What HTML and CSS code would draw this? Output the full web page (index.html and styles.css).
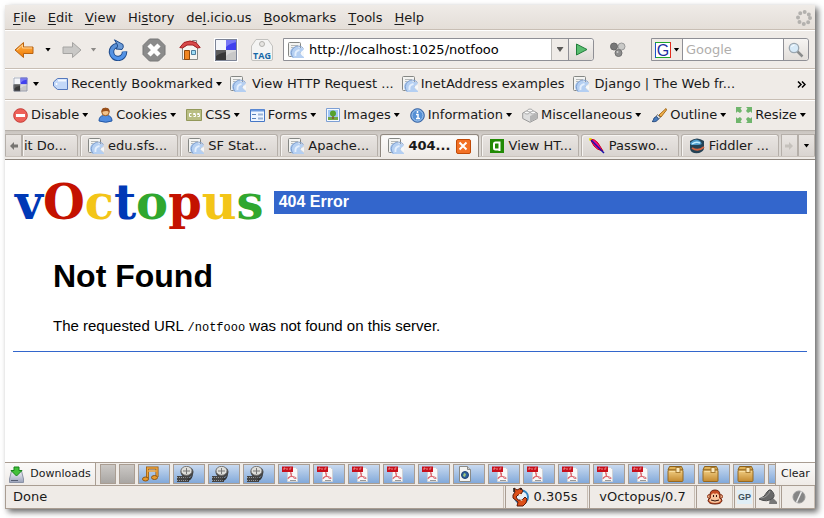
FILE: index.html
```html
<!DOCTYPE html>
<html lang="en">
<head>
<meta charset="utf-8">
<title>404 Error</title>
<link rel="stylesheet" href="styles.css">
</head>
<body>
<svg class="defs" aria-hidden="true">
  <defs>
    <linearGradient id="orange" x1="0" y1="0" x2="0" y2="1"><stop offset="0" stop-color="#ffb650"/><stop offset="1" stop-color="#f07800"/></linearGradient>
    <linearGradient id="blue" x1="0" y1="0" x2="0" y2="1"><stop offset="0" stop-color="#5a8fd4"/><stop offset="1" stop-color="#4f93ec"/></linearGradient>
    <linearGradient id="disk" x1="0" y1="0" x2="0" y2="1"><stop offset="0" stop-color="#f4f5f9"/><stop offset="1" stop-color="#9aa2ba"/></linearGradient>
    <linearGradient id="wood" x1="0" y1="0" x2="0" y2="1"><stop offset="0" stop-color="#f2cf84"/><stop offset="1" stop-color="#c48a30"/></linearGradient>
    <symbol id="page" viewBox="0 0 16 16"><rect x=".5" y=".5" width="12" height="14" rx="1" fill="#f4f4f2" stroke="#858784"/><path d="M3 3.500h7M3 5.500h7M3 7.500h3M3 9.500h2" stroke="#b5b8b8"/><path d="M5 16A6 6 0 0 1 11 5.500Q14 5.500 16 7.500L12.500 10.500 13.500 13 16 15V16z" fill="#b4cff2"/><path d="M5 15.500A6 6 0 0 1 15.500 6.500" fill="none" stroke="#7f9fce"/><path d="M7.500 14Q6.500 9 11.500 8" stroke="#e4effd" stroke-width="2" fill="none"/><path d="M12 11l4-2v5z" fill="#f6f8fa"/></symbol>
    <symbol id="delicious" viewBox="0 0 24 24"><path fill="#fff" d="M0 0h24v24H0z"/><path d="M1 1h11v11H1z" fill="#f4f6fa"/><path d="M12 1h11v11H12z" fill="#4141ee"/><path d="M12 1h11v3Q16 5 12 9z" fill="#7777f4"/><path d="M1 12h11v11H1z" fill="#383838"/><path d="M1 12h11v2Q5 15 1 19z" fill="#5c5c5c"/><path d="M12 12h11v11H12z" fill="#c8c8c8"/><path d="M12 12h11v1Q16 14 12 18z" fill="#dadada"/><path d="M1.500 1.500h21v21h-21z" fill="none" stroke="#7d8496"/></symbol>
    <symbol id="pdf" viewBox="0 0 17 16"><path d="M5.500 1.500h8l2 2v12h-10z" fill="#f8f8f8" stroke="#cfd2d6"/><path d="M0 .5h11V6H0z" fill="#c8101c"/><path d="M2 4V2h1v1M5 2v2M8 4V2h1.500" stroke="#e88c8c" fill="none"/><path d="M8.500 6.500c2 0 1 2.500 0 4S5.500 13.500 6 12s4-2 6.500-1 2 1.500.500 1.500S8 8 8.500 6.500z" fill="none" stroke="#dd6068"/><path d="M8 14.500h6" stroke="#999"/></symbol>
    <symbol id="film" viewBox="0 0 17 16"><path d="M0 10h12v6H0z" fill="#444"/><path d="M0 11.500h12M0 14.500h12" stroke="#999" stroke-dasharray="1 1"/><path d="M11 15q5-1 5-9l-2 5-4 2z" fill="#333"/><ellipse cx="10" cy="6" rx="6.500" ry="5.500" fill="#444"/><ellipse cx="9.500" cy="4.800" rx="5.500" ry="4.500" fill="#dededa" stroke="#777"/><path d="M9.500 2v6M6 5h7" stroke="#777"/></symbol>
    <symbol id="box" viewBox="0 0 17 16"><path d="M1 4l1.500-3.500h12L16 4z" fill="#e0b258" stroke="#89601f"/><rect x="1" y="4" width="15" height="11.500" rx="1" fill="url(#wood)" stroke="#966820"/><path d="M2.500 5.500h12" stroke="#f8dda0"/><rect x="9" y="1.500" width="4" height="5" fill="#fae9bd" stroke="#a77b32"/></symbol>
  </defs>
</svg>
<div class="window">
  <header class="menubar">
    <nav class="menus">
      <button><u>F</u>ile</button><button><u>E</u>dit</button><button><u>V</u>iew</button><button>Hi<u>s</u>tory</button><button>de<u>l</u>.icio.us</button><button><u>B</u>ookmarks</button><button><u>T</u>ools</button><button><u>H</u>elp</button>
    </nav>
    <svg class="throbber" viewBox="0 0 16 16"><circle cx="8" cy="8" r="6" fill="none" stroke="#b3b1ae" stroke-width="4" stroke-linecap="round" stroke-dasharray="0 4.712"/></svg>
  </header>

  <div class="navbar">
    <button class="step" aria-label="Back"><svg width="20" height="18" viewBox="0 0 20 18"><path d="M1 9l8.500-7.500V6H19v6.500H9.500v4z" fill="url(#orange)" stroke="#b96312"/><path d="M3 9l5.500-5v3H18" fill="none" stroke="#ffd092"/></svg></button>
    <button class="drop" aria-label="Back history"><i class="caret"></i></button>
    <button class="step" aria-label="Forward"><svg width="20" height="18" viewBox="0 0 20 18"><path d="M19 9l-8.500-7.500V6H1v6.500h9.500v4z" fill="#c9c8c6" stroke="#a5a4a2"/></svg></button>
    <button class="drop short" aria-label="Forward history"><i class="caret dim"></i></button>
    <button class="tool" aria-label="Reload"><svg width="20" height="22" viewBox="0 0 20 22"><path d="M16.500 12.500A6.500 6.500 0 1 1 9 6.500" fill="none" stroke="#1f4b8c" stroke-width="5.500"/><path d="M16.500 12.500A6.500 6.500 0 1 1 9 6.500" fill="none" stroke="url(#blue)" stroke-width="3.500"/><path d="M6.500.8L15 5.500q1 3-1 5L8 10q2-2 1.500-4z" fill="#6c9cd8" stroke="#1f4b8c"/></svg></button>
    <button class="tool" aria-label="Stop"><svg width="24" height="24" viewBox="0 0 24 24"><path d="M7.500 1h9L23 7.500v9L16.500 23h-9L1 16.500v-9z" fill="#8b8b8b" stroke="#777"/><path d="M7 7l10 10M17 7L7 17" stroke="#fff" stroke-width="4.500"/></svg></button>
    <button class="tool" aria-label="Home"><svg width="22" height="22" viewBox="0 0 22 22"><path d="M13.500 1.500h4v6h-4z" fill="#eee" stroke="#888"/><path d="M3.500 9L11 4l7.500 5v11.500h-15z" fill="#f6f5f1" stroke="#888a85"/><path d="M5.500 11.500h5v9h-5z" fill="#f28620" stroke="#934908"/><path d="M12.500 11.500h4v4h-4z" fill="#9fddf5" stroke="#4c7f9f"/><path d="M.8 8.500L5 3.500q6-3 12 0l4.200 5-2.700.5L14 6H8L3.500 9z" fill="#d84a4a" stroke="#a41e22"/></svg></button>
    <button class="tool" aria-label="Delicious bookmarks"><svg width="24" height="24"><use href="#delicious"/></svg></button>
    <button class="tool" aria-label="Tag"><svg width="24" height="24" viewBox="0 0 24 24"><path d="M1.500 8L6 1.500h12L22.500 8v13q0 1.500-1.500 1.500H3q-1.500 0-1.500-1.500z" fill="#f4f4f3" stroke="#c2c1be"/><circle cx="12" cy="6" r="2.500" fill="#e6e5e2" stroke="#b2b1ad"/><text x="12" y="21" class="tag-text">TAG</text></svg></button>

    <form class="address">
      <svg width="16" height="16"><use href="#page"/></svg>
      <input type="text" aria-label="Location" value="http://localhost:1025/notfooo">
      <button type="button" class="address-drop" aria-label="Location history"><i class="caret wide"></i></button>
      <button type="button" class="go" aria-label="Go"><svg width="13" height="13" viewBox="0 0 13 13"><path d="M1.500 1l10.500 5.500L1.500 12z" fill="#59bd70" stroke="#217e3c"/></svg></button>
    </form>
    <button class="cluster" aria-label="Feeds"><svg width="16" height="16" viewBox="0 0 16 16"><circle cx="11.500" cy="4.500" r="3.500" fill="#c9c9c7" stroke="#999"/><circle cx="4" cy="4.500" r="3.500" fill="#777" stroke="#666"/><circle cx="8.500" cy="11" r="3.500" fill="#8d8d8d" stroke="#6f6f6f"/><circle cx="7.500" cy="10" r="1" fill="#ccc"/></svg></button>
    <form class="search">
      <button type="button" class="engine" aria-label="Search engine"><svg width="16" height="16" viewBox="0 0 16 16"><path fill="#fff" d="M0 0h16v16H0z"/><path d="M.5 16V.5" stroke="#1853c8"/><path d="M0 .5h15M1 15.500h14" stroke="#22a62c"/><path d="M15.500 0v16" stroke="#e22c1e"/><text x="8" y="14" class="g-text">G</text></svg><i class="caret"></i></button>
      <input type="text" aria-label="Search" placeholder="Google">
      <button type="button" class="find" aria-label="Find"><svg width="16" height="16" viewBox="0 0 16 16"><path d="M9 9l5.500 5.500" stroke="#8a8c8c" stroke-width="2.500"/><circle cx="6" cy="6" r="4.700" fill="#d7eaf8" stroke="#9aa6b0" stroke-width="1.300"/><path d="M3.500 5q1-2 3-2" fill="none" stroke="#fff"/></svg></button>
    </form>
  </div>

  <div class="bookmarks">
    <button class="mark"><svg width="15" height="15"><use href="#delicious"/></svg><i class="caret"></i></button>
    <button class="mark recent"><svg width="15" height="12" viewBox="0 0 15 12"><path d="M4.500.500h10v11h-10L.500 8V4z" fill="#c3d8f8" stroke="#5478bd"/><path d="M5 2.500h8" stroke="#f3f8ff" stroke-width="2"/><circle cx="3.500" cy="6" r="1" fill="#fff"/></svg>Recently Bookmarked<i class="caret"></i></button>
    <a class="mark spaced" href="#"><svg width="16" height="16"><use href="#page"/></svg>View HTTP Request ...</a>
    <a class="mark" href="#"><svg width="16" height="16"><use href="#page"/></svg>InetAddress examples</a>
    <a class="mark spaced" href="#"><svg width="16" height="16"><use href="#page"/></svg>Django | The Web fr...</a>
    <button class="more" aria-label="More bookmarks"><svg width="9" height="7" viewBox="0 0 9 7"><path d="M1 .5l3 3-3 3M5 .5l3 3-3 3" fill="none" stroke="#000" stroke-width="1.500"/></svg></button>
  </div>

  <div class="devbar">
    <button class="mark"><svg width="15" height="15" viewBox="0 0 15 15"><circle cx="7.500" cy="7.500" r="6.800" fill="#ee6058" stroke="#c53b35"/><path d="M3 7.500h9" stroke="#fff" stroke-width="3"/></svg>Disable<i class="caret"></i></button>
    <button class="mark"><svg width="15" height="16" viewBox="0 0 15 16"><path d="M1 14q0-5 4.500-5.500h4Q14 9 14 14q-6 2.500-13 0z" fill="#4e8be0" stroke="#2458a6"/><circle cx="7.500" cy="5" r="3.700" fill="#f2c28b" stroke="#9b5b22"/><path d="M3.500 5Q3 .7 7.500.7T11.500 5Q9 3 3.500 5z" fill="#99501c"/></svg>Cookies<i class="caret"></i></button>
    <button class="mark"><svg width="16" height="12" viewBox="0 0 16 12"><path d="M.5.500h15v11H.500z" fill="#b9be83" stroke="#93985a"/><path d="M5.500 4.500h-2v3h2M9.500 4.500h-2v1h2v2h-2M13.500 4.500h-2v1h2v2h-2" fill="none" stroke="#fff"/></svg>CSS<i class="caret"></i></button>
    <button class="mark"><svg width="15" height="13" viewBox="0 0 15 13"><path d="M.5.500h14v12H.500z" fill="#eef5ff" stroke="#4677c6"/><path d="M1 1.500h13" stroke="#6c9ae0" stroke-width="2"/><path d="M2 5.500h4M2 9.500h4" stroke="#5780bb"/><path d="M8 5.500h5M8 9.500h5" stroke="#9ab3d8" stroke-width="2"/></svg>Forms<i class="caret"></i></button>
    <button class="mark"><svg width="14" height="14" viewBox="0 0 14 14"><path d="M.5.500h13v13H.500z" fill="#f5f9ff" stroke="#7d9fd4"/><path d="M2 2h10v7H2z" fill="#9fc7f4"/><path d="M2 9h10v3H2z" fill="#71a842"/><path d="M7 6v5" stroke="#86512a" stroke-width="1.500"/><circle cx="7" cy="5.500" r="3" fill="#55a22c"/></svg>Images<i class="caret"></i></button>
    <button class="mark"><svg width="15" height="15" viewBox="0 0 15 15"><circle cx="7.500" cy="7.500" r="6.800" fill="#5590d5" stroke="#345f9f"/><circle cx="7.500" cy="7.500" r="5.500" fill="none" stroke="#a5c7ed"/><path d="M6 6.500h2v4M6 10.500h4M7.500 3v2" fill="none" stroke="#fff" stroke-width="1.500"/></svg>Information<i class="caret"></i></button>
    <button class="mark"><svg width="16" height="15" viewBox="0 0 16 15"><path d="M.7 5L8 1.500 15.300 5v5.500L8 14.300.7 10.500z" fill="#dedede" stroke="#999"/><path d="M8 8v6l7-4V5z" fill="#b5b5b5"/><ellipse cx="5" cy="4.500" rx="2.500" ry="1.500" fill="#fafafa" stroke="#aaa"/><ellipse cx="11" cy="4.500" rx="2.500" ry="1.500" fill="#fafafa" stroke="#aaa"/><ellipse cx="8" cy="2.500" rx="2.500" ry="1.500" fill="#fafafa" stroke="#aaa"/></svg>Miscellaneous<i class="caret"></i></button>
    <button class="mark"><svg width="16" height="15" viewBox="0 0 16 15"><path d="M15 .5L8 7l2 2 5.500-7z" fill="#f2b24d" stroke="#a66b1a"/><path d="M6.500 6.500l3 3-2 1.500-2.500-2.500z" fill="#ddd" stroke="#777"/><path d="M1 13.500q2-1 2-3.500l2.500-1.500 2 2.500q-2 3.500-6.500 2.500z" fill="#497dc0" stroke="#2a4d80"/></svg>Outline<i class="caret"></i></button>
    <button class="mark"><svg width="16" height="16" viewBox="0 0 16 16"><path d="M0 0h6L4.500 1.500 6 4 4 6 1.500 4.500 0 6zM16 0h-6l1.500 1.500L10 4l2 2 2.500-1.500L16 6zM0 16h6l-1.500-1.500L6 12l-2-2-2.500 1.500L0 10zM16 16h-6l1.500-1.500L10 12l2-2 2.500 1.500L16 10z" fill="#6fb56c"/></svg>Resize<i class="caret"></i></button>
    <button class="mark" aria-label="Tools"><svg width="15" height="15" viewBox="0 0 15 15"><circle cx="7" cy="9" r="6" fill="#9cc2f3" stroke="#4d80c8"/></svg></button>
  </div>

  <div class="tabs">
    <button class="scroll" aria-label="Scroll tabs left"><svg width="8" height="8" viewBox="0 0 8 8"><path d="M0 4l4-4v2.500h4v3H4V8z" fill="#777572"/></svg></button>
    <button class="tab cut">it Do...</button>
    <button class="tab"><svg width="16" height="16"><use href="#page"/></svg>edu.sfs...</button>
    <button class="tab"><svg width="16" height="16"><use href="#page"/></svg>SF Stat...</button>
    <button class="tab"><svg width="16" height="16"><use href="#page"/></svg>Apache...</button>
    <div class="tab active"><svg width="16" height="16"><use href="#page"/></svg><span>404...</span><button class="close" aria-label="Close tab"><svg width="14" height="14" viewBox="0 0 14 14"><path d="M3.500 3.500l7 7M10.500 3.500l-7 7" stroke="#fff" stroke-width="2"/></svg></button></div>
    <button class="tab"><svg width="16" height="16" viewBox="0 0 16 16"><path d="M1 1h14v14H1z" fill="#218a05"/><path d="M10.500 13V4.500h-4Q5 4.500 5 6v4q0 1.500 1.500 1.500H10" fill="none" stroke="#fff" stroke-width="2"/></svg>View HT...</button>
    <button class="tab"><svg width="16" height="16" viewBox="0 0 16 16"><path d="M1 1q5 0 8 4l5 8q-6-1-9-5z" fill="#ee1090" stroke="#d00018"/><path d="M2 2l13 13" stroke="#1910a8" stroke-width="1.500"/><path d="M0 1h3M1 0v3" stroke="#e9e900"/></svg>Passwo...</button>
    <button class="tab"><svg width="16" height="16" viewBox="0 0 16 16"><path d="M1 3q7-5 14 0v8q-2 5-10 4-4-1-4-5z" fill="#244154"/><path d="M1 5q5-6 10-2 4 4-2 4H2z" fill="#4e9ccc"/><path d="M3 6q4-3 8-1" stroke="#c2edff" stroke-width="1.500" fill="none"/><path d="M3 10q6 4 12-1" stroke="#d26442" stroke-width="2" fill="none"/></svg>Fiddler ...</button>
    <button class="scroll right" aria-label="Scroll tabs right"><svg width="8" height="8" viewBox="0 0 8 8"><path d="M8 4L4 0v2.500H0v3h4V8z" fill="#c5c1bc"/></svg></button>
    <button class="scroll" aria-label="All tabs"><i class="caret"></i></button>
  </div>

  <main class="page">
    <div class="banner">
      <div class="logo"><span class="b">v</span><span class="r">O</span><span class="y">c</span><span class="b">t</span><span class="g">o</span><span class="r">p</span><span class="y">u</span><span class="g">s</span></div>
      <div class="error-title">404 Error</div>
    </div>
    <div class="message">
      <h1>Not Found</h1>
      <p>The requested URL <code>/notfooo</code> was not found on this server.</p>
    </div>
    <hr>
  </main>

  <div class="downloads">
    <button class="dl-label"><svg width="15" height="17" viewBox="0 0 15 17"><path d="M2.500 5h10l2 8v3.500H.5V13z" fill="url(#disk)" stroke="#8b93a6"/><path d="M2 14.500h7" stroke="#555d72"/><path d="M5 1h5v3.500h3L7.500 10 2 4.500h3z" fill="#42c13a" stroke="#17831b"/></svg>Downloads</button>
    <div class="dl-list">
      <button class="dl done" aria-label="Finished"></button>
      <button class="dl done" aria-label="Finished"></button>
      <button class="dl" aria-label="Audio"><svg width="17" height="16" viewBox="0 0 17 16"><path d="M5.500 12.500V2H15v9" fill="none" stroke="#8c5714" stroke-width="3"/><path d="M5.500 12.500V2H15v9M5 5h10" fill="none" stroke="#eea43c" stroke-width="1.500"/><ellipse cx="3.500" cy="13" rx="3" ry="2" fill="#e99a2d" stroke="#8c5714"/><ellipse cx="12.500" cy="11.500" rx="3" ry="2" fill="#e99a2d" stroke="#8c5714"/></svg></button>
      <button class="dl" aria-label="Video"><svg width="17" height="16"><use href="#film"/></svg></button>
      <button class="dl" aria-label="Video"><svg width="17" height="16"><use href="#film"/></svg></button>
      <button class="dl" aria-label="Video"><svg width="17" height="16"><use href="#film"/></svg></button>
      <button class="dl" aria-label="PDF"><svg width="17" height="16"><use href="#pdf"/></svg></button>
      <button class="dl" aria-label="PDF"><svg width="17" height="16"><use href="#pdf"/></svg></button>
      <button class="dl" aria-label="PDF"><svg width="17" height="16"><use href="#pdf"/></svg></button>
      <button class="dl" aria-label="PDF"><svg width="17" height="16"><use href="#pdf"/></svg></button>
      <button class="dl" aria-label="PDF"><svg width="17" height="16"><use href="#pdf"/></svg></button>
      <button class="dl" aria-label="Web page"><svg width="17" height="16" viewBox="0 0 17 16"><path d="M2.500.500h8l3 3v12h-11z" fill="#f3f3f1" stroke="#8a8a86"/><path d="M10.500.500v3h3" fill="#ccc" stroke="#8a8a86"/><circle cx="8" cy="9" r="3.500" fill="#2e5f9d" stroke="#1f4272"/><path d="M7 7l2 1-1 3-2-1z" fill="#a2c878"/></svg></button>
      <button class="dl" aria-label="PDF"><svg width="17" height="16"><use href="#pdf"/></svg></button>
      <button class="dl" aria-label="PDF"><svg width="17" height="16"><use href="#pdf"/></svg></button>
      <button class="dl" aria-label="PDF"><svg width="17" height="16"><use href="#pdf"/></svg></button>
      <button class="dl" aria-label="PDF"><svg width="17" height="16"><use href="#pdf"/></svg></button>
      <button class="dl" aria-label="PDF"><svg width="17" height="16"><use href="#pdf"/></svg></button>
      <button class="dl" aria-label="Archive"><svg width="17" height="16"><use href="#box"/></svg></button>
      <button class="dl" aria-label="Archive"><svg width="17" height="16"><use href="#box"/></svg></button>
      <button class="dl" aria-label="Archive"><svg width="17" height="16"><use href="#box"/></svg></button>
      <button class="dl" aria-label="Archive"></button>
    </div>
    <button class="clear">Clear</button>
  </div>

  <footer class="status">
    <div class="cell message-cell">Done</div>
    <div class="cell timer"><svg width="17" height="20" viewBox="0 0 17 20"><circle cx="9.500" cy="10" r="6.500" fill="#e7f1fa" stroke="#3385c0" stroke-width="2"/><path d="M2 1l3 2 4-2 2 3-2 3-3 1-2 2 2 3h4l3-3 2 2-1 4-3 3H5l1-4-5-4V8l2-3z" fill="#dd4f18" stroke="#5a1a0b"/><path d="M7 7h3v2H7zM8 12l3 1-2 1z" fill="#f3e4ce"/><path d="M2 1v4M9 1v2" stroke="#222" stroke-width="1.500"/></svg>0.305s</div>
    <div class="cell server">vOctopus/0.7</div>
    <div class="cell monkey"><svg width="16" height="16" viewBox="0 0 16 16"><circle cx="2.500" cy="7.500" r="2" fill="#f5b58c" stroke="#8c3418"/><circle cx="13.500" cy="7.500" r="2" fill="#f5b58c" stroke="#8c3418"/><path d="M3 6q0-5 5-5t5 5v3l2 2q0 4-7 4t-7-4l2-2z" fill="#c64c22" stroke="#6b2410"/><path d="M4 6q2-3 4-1 2-2 4 1v3l2 2q-1 3-6 3t-6-3l2-2z" fill="#f8c49c"/><path d="M6.500 6v2M9.500 6v2M4 11q4 2 8 0" fill="none" stroke="#30100a"/></svg></div>
    <div class="cell gp"><span>GP</span></div>
    <div class="cell dish"><svg width="20" height="18" viewBox="0 0 20 18"><path d="M12 10l-1 6h8v-2l-4-4z" fill="#777"/><path d="M13 2q5 5 2 8-6 5-14 1 6-2 8-7 2-3 4-2z" fill="#686868" stroke="#505050"/><path d="M3 10q7-1 9-7" stroke="#999" fill="none"/></svg></div>
    <div class="cell blocked"><svg width="14" height="14" viewBox="0 0 14 14"><circle cx="7" cy="7" r="6" fill="#858585" stroke="#9a9a9a"/><path d="M9.500 1.500l-5 11" stroke="#ededed" stroke-width="1.500"/></svg></div>
  </footer>
</div>
</body>
</html>
```

FILE: styles.css
```css
* { box-sizing: border-box; }
body {
  margin: 0;
  padding: 5px 9px 9px 5px;
  min-height: 100vh;
  display: flex;
  background: #fff;
  color: #1a1a1a;
  font: 13px/16px "DejaVu Sans", sans-serif;
}
button, input {
  margin: 0;
  padding: 0;
  border: 0;
  background: none;
  color: inherit;
  font: inherit;
}
button { display: flex; align-items: center; justify-content: center; flex: none; white-space: nowrap; }
svg { display: block; flex: none; }
a { color: inherit; text-decoration: none; }
.defs { position: absolute; width: 0; height: 0; }

.window {
  flex: 1;
  min-width: 0;
  display: flex;
  flex-direction: column;
  background: #efebe7;
  box-shadow: 3px 3px 6px rgba(0, 0, 0, .6);
}
.caret {
  flex: none;
  width: 6px;
  height: 4px;
  background: #000;
  clip-path: polygon(0 0, 100% 0, 50% 100%);
}
.caret.dim { background: #8c8a87; }
.caret.wide { width: 7px; height: 5px; background: #5a5957; }

.menubar, .navbar, .bookmarks, .devbar {
  display: flex;
  align-items: center;
  border-bottom: 1px solid #c8beb4;
  box-shadow: 0 1px #fff;
}
.menubar {
  height: 25px;
  padding: 1px 3px 0 8px;
  justify-content: space-between;
  background: linear-gradient(#efebe7, #e4ded8);
}
.menus { display: flex; gap: 12px; }
.menus u { text-underline-offset: 2px; }
.throbber { width: 16px; height: 16px; }

.navbar { height: 39px; padding: 1px 6px 0 4px; }
.step { width: 30px; height: 30px; }
.drop { width: 18px; height: 30px; }
.drop.short { width: 13px; }
.tool { width: 36px; height: 30px; }
.tag-text { font: bold 9px "Open Sans", sans-serif; fill: #1668a8; text-anchor: middle; }
.address, .search { display: flex; align-items: stretch; height: 23px; border: 1px solid #8f8f95; border-radius: 0 3px 3px 0; background: #fff; color: #000; }
.address { flex: 1; min-width: 0; margin-left: 3px; padding-left: 4px; }
.address > svg { align-self: center; }
.address input { flex: 1; min-width: 0; padding-left: 5px; }
.address-drop { width: 17px; border-left: 1px solid #b9b7b4; background: #efebe7; }
.go { width: 25px; border-left: 1px solid #8f8f95; border-radius: 0 3px 3px 0; background: linear-gradient(#f6f4f2, #dfdbd7); }
.cluster { width: 57px; padding-right: 10px; }
.search { width: 158px; }
.engine { width: 31px; gap: 3px; border-right: 1px solid #8f8f95; background: #efebe7; }
.g-text { font: 16px "Liberation Sans", sans-serif; fill: #1c2fa0; text-anchor: middle; }
.search input { flex: 1; min-width: 0; padding-left: 3px; }
.search input::placeholder { color: #b0aeac; opacity: 1; }
.find { width: 25px; border-left: 1px solid #8f8f95; border-radius: 0 3px 3px 0; background: linear-gradient(#f6f4f2, #e2deda); }

.bookmarks { height: 31px; padding: 0 9px 0 8px; gap: 8px; }
.mark { display: flex; align-items: center; gap: 3px; flex: none; white-space: nowrap; }
.bookmarks .mark:first-child { gap: 5px; margin-right: 6px; }
.mark.spaced { gap: 6px; }
.more { margin-left: auto; }

.devbar { height: 31px; padding-left: 8px; gap: 10px; overflow: hidden; border-bottom-color: #b5afa9; box-shadow: none; }

.tabs {
  height: 29px;
  display: flex;
  align-items: flex-end;
  gap: 2px;
  padding-top: 3px;
  background: linear-gradient(#c9c4bf, #dcd8d4 8px, #dcd8d4 25px, #a59b92 25px, #efebe7 26px, #efebe7 28px, #8f877f 28px);
  padding-bottom: 4px;
}
.tab, .scroll {
  height: 22px;
  border: 1px solid #b5afa9;
  border-bottom: 0;
  background: linear-gradient(#e9e5e2, #d9d4d0);
}
.tab {
  display: flex;
  align-items: center;
  justify-content: flex-start;
  flex: 1 1 98px;
  min-width: 0;
  gap: 4px;
  padding-left: 7px;
  border-radius: 3px 3px 0 0;
  box-shadow: inset 1px 1px #f6f4f2;
  white-space: nowrap;
  overflow: hidden;
}
.tab.cut { flex: 0 0 56px; margin-left: -2px; padding-left: 1px; border-radius: 0 3px 0 0; }
.tab.active { height: 23px; margin-bottom: -1px; background: linear-gradient(#fdfcfc, #efebe7); border-color: #8f877f; font-weight: bold; }
.close { width: 15px; height: 15px; margin-left: auto; margin-right: 7px; border: 1px solid #c14a08; border-radius: 2px; background: #f27024; }
.scroll { width: 17px; }
.scroll:last-child { margin-left: -2px; }

.page {
  flex: 1;
  padding: 14px 8px 0;
  background: #fff;
  color: #000;
  font: 16px/18px "Liberation Sans", sans-serif;
}
.banner { display: flex; align-items: center; gap: 10px; }
.logo { padding-left: 2px; font: bold 48px/56px "DejaVu Serif", serif; }
.b { color: #0039b6; }
.r { color: #c41200; }
.y { color: #f3c518; }
.g { color: #30a72f; }
.error-title { flex: 1; padding: 2px 5px 3px; background: #36c; color: #fff; font-weight: bold; }
.message { margin-left: 40px; }
h1 { margin: 27px 0 0; font-size: 32px; line-height: 38px; }
p { margin: 22px 0 0; font-size: 15px; }
code { font: 12px "Liberation Mono", monospace; }
hr { margin: 16px 0 0; border: 0; border-top: 1px solid #36c; }

.downloads {
  display: flex;
  height: 23px;
  border-top: 1px solid #a99d92;
  font-size: 11px;
}
.dl-label { width: 91px; gap: 6px; border-right: 1px solid #a99d92; background: linear-gradient(#fbfaf9, #efebe7); }
.dl-list { flex: 1; min-width: 0; display: flex; gap: 3px; padding: 1px 0 1px 4px; overflow: hidden; }
.dl {
  width: 32px;
  justify-content: flex-start;
  padding-left: 3px;
  border: 1px solid #a99d92;
  background: linear-gradient(#c9daf0, #82a9da);
}
.dl.done { width: 16px; background: linear-gradient(#cbc8c5, #a9a6a3); }
.clear { width: 40px; border-left: 1px solid #a99d92; background: linear-gradient(#fbfaf9, #efebe7); }

.status { display: flex; gap: 1px; height: 24px; border: 1px solid #a99d92; border-width: 1px 0; }
.cell { display: flex; align-items: center; justify-content: center; flex: none; border-left: 1px solid #a99d92; box-shadow: inset -1px 0 #c8beb4; }
.message-cell { flex: 1; justify-content: flex-start; padding-left: 7px; }
.timer { width: 83px; gap: 5px; padding-right: 5px; }
.server { width: 106px; }
.monkey { width: 37px; }
.gp { width: 20px; }
.gp span { width: 15px; background: #e0eef6; color: #41515c; font: bold 9px/14px "Liberation Sans", sans-serif; text-align: center; }
.dish { width: 25px; }
.blocked { width: 34px; }
```
